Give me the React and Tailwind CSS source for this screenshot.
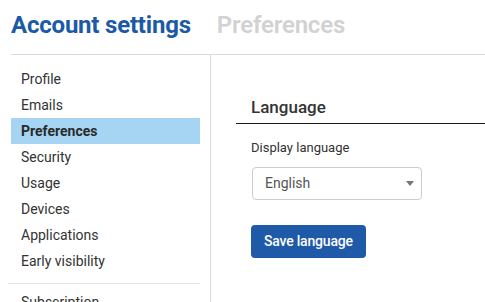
import React, { useState } from "react";

const navItems = [
  "Profile",
  "Emails",
  "Preferences",
  "Security",
  "Usage",
  "Devices",
  "Applications",
  "Early visibility",
];

const App = () => {
  const [language, setLanguage] = useState("English");

  return (
    <div className="h-[302px] w-[485px] overflow-hidden bg-white font-['Roboto',sans-serif]">
      {/* header */}
      <div className="ml-[11px] flex h-[55px] items-center gap-[26px] border-b border-[#d3dbe4] pb-[4px]">
        <h1 className="text-[24px] font-bold tracking-[-0.2px] text-[#1c5aa6]">
          Account settings
        </h1>
        <span className="text-[24px] font-semibold tracking-[-0.2px] text-[#d2d2d2]">
          Preferences
        </span>
      </div>

      <div className="flex h-[247px]">
        {/* sidebar */}
        <div className="w-[211px] shrink-0 border-r border-[#dcdcdc] pl-[11px] pr-[10px] pt-[11px]">
          {navItems.map((item) => (
            <div
              key={item}
              className={
                item === "Preferences"
                  ? "flex h-[26px] items-center bg-[#a5d5f3] px-[10px] text-[14px] font-bold text-[#2a2a2a]"
                  : "flex h-[26px] items-center px-[10px] text-[14px] text-[#333333]"
              }
            >
              {item}
            </div>
          ))}
          <div className="mt-[9px] -ml-[3px] border-t border-[#e2e2e2]" />
          <div className="mt-[8px] px-[10px] text-[14px] text-[#333333]">
            Subscription
          </div>
        </div>

        {/* content */}
        <div className="flex-1 pl-[25px] pt-[40px]">
          <div className="border-b border-[#1a1a1a] pb-[2px] pl-[15px]">
            <h2 className="text-[17px] font-medium text-[#333333]">Language</h2>
          </div>
          <div className="pl-[15px] pt-[14px]">
            <label className="block text-[13px] text-[#333333]">
              Display language
            </label>
            <div className="relative ml-[1px] mt-[10px] h-[33px] w-[170px]">
              <select
                value={language}
                onChange={(e) => setLanguage(e.target.value)}
                className="h-full w-full appearance-none rounded-[4px] border border-[#cccccc] bg-white pl-[12px] text-[14px] text-[#555555] outline-none"
              >
                <option>English</option>
              </select>
              <svg
                className="pointer-events-none absolute right-[8px] top-[14px]"
                width="8"
                height="5"
                viewBox="0 0 8 5"
              >
                <path d="M0 0h8L4 5z" fill="#777777" />
              </svg>
            </div>
            <button className="mt-[25px] h-[33px] rounded-[4px] bg-[#1e5aa8] px-[13px] text-[14px] font-medium tracking-[-0.2px] text-white">
              Save language
            </button>
          </div>
        </div>
      </div>
    </div>
  );
};

export default App;
